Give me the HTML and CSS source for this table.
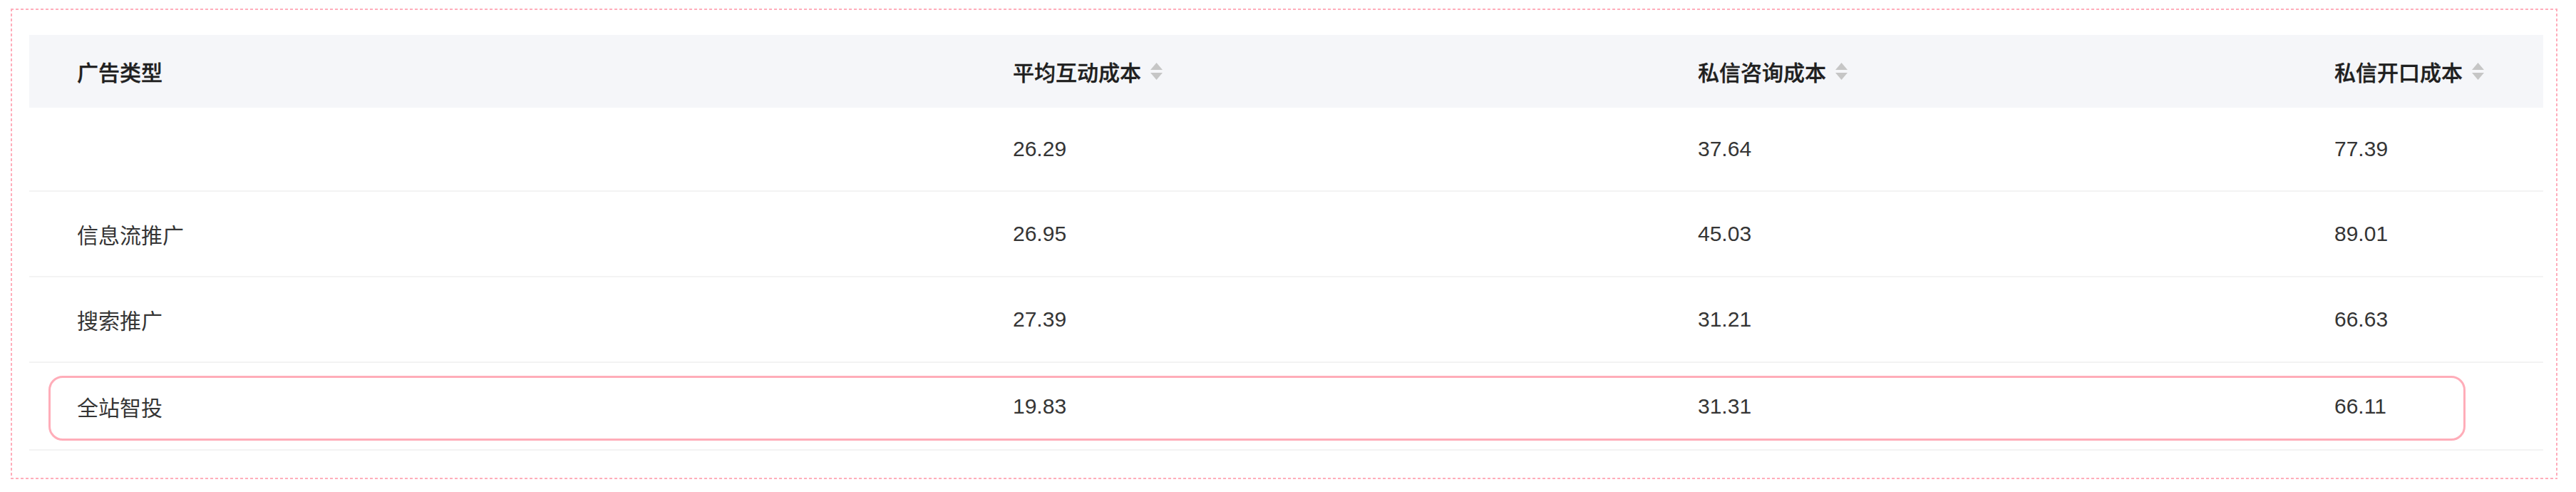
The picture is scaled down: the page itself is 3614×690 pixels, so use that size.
FILE: index.html
```html
<!DOCTYPE html>
<html lang="zh-CN">
<head>
<meta charset="utf-8">
<title>广告类型成本</title>
<link rel="stylesheet" href="styles.css">
</head>
<body>
<div class="frame">
  <div class="table">
    <div class="row head">
      <div class="cell">广告类型</div>
      <div class="cell">平均互动成本<svg class="sort" viewBox="0 0 17 24" width="17" height="24"><polygon points="8.5,0 17,10 0,10"/><polygon points="0,14 17,14 8.5,24"/></svg></div>
      <div class="cell">私信咨询成本<svg class="sort" viewBox="0 0 17 24" width="17" height="24"><polygon points="8.5,0 17,10 0,10"/><polygon points="0,14 17,14 8.5,24"/></svg></div>
      <div class="cell">私信开口成本<svg class="sort" viewBox="0 0 17 24" width="17" height="24"><polygon points="8.5,0 17,10 0,10"/><polygon points="0,14 17,14 8.5,24"/></svg></div>
    </div>
    <div class="row body first">
      <div class="cell"></div>
      <div class="cell">26.29</div>
      <div class="cell">37.64</div>
      <div class="cell">77.39</div>
    </div>
    <div class="row body">
      <div class="cell">信息流推广</div>
      <div class="cell">26.95</div>
      <div class="cell">45.03</div>
      <div class="cell">89.01</div>
    </div>
    <div class="row body">
      <div class="cell">搜索推广</div>
      <div class="cell">27.39</div>
      <div class="cell">31.21</div>
      <div class="cell">66.63</div>
    </div>
    <div class="row body last highlighted">
      <div class="cell">全站智投</div>
      <div class="cell">19.83</div>
      <div class="cell">31.31</div>
      <div class="cell">66.11</div>
    </div>
  </div>
</div>
</body>
</html>
```

FILE: styles.css
```css
html, body {
  margin: 0;
  padding: 0;
  background: #ffffff;
}

body {
  font-family: "Liberation Sans", "Noto Sans CJK SC", sans-serif;
  color: #333333;
}

.frame {
  box-sizing: border-box;
  margin: 12px 0 0 15px;
  width: 3573px;
  height: 660px;
  padding: 37px 16px 0 26px;
  background:
    repeating-linear-gradient(90deg, #ffadbb 0 4px, transparent 4px 7px) left top / 100% 2px no-repeat,
    repeating-linear-gradient(90deg, #ffadbb 0 4px, transparent 4px 7px) left bottom / 100% 2px no-repeat,
    repeating-linear-gradient(180deg, #ffadbb 0 4px, transparent 4px 7px) left top / 2px 100% no-repeat,
    repeating-linear-gradient(180deg, #ffadbb 0 4px, transparent 4px 7px) right top / 2px 100% no-repeat;
}

.table {
  width: 3527px;
}

.row {
  display: grid;
  grid-template-columns: 1313px 961px 893px 1fr;
  align-items: center;
  box-sizing: border-box;
}

.cell {
  padding-left: 67px;
  font-size: 30px;
  display: flex;
  align-items: center;
  white-space: nowrap;
}

.head {
  height: 102px;
  background: #f5f6f9;
}

.head .cell {
  font-weight: 500;
  color: #1f1f1f;
  -webkit-text-stroke: 0.4px #1f1f1f;
}

.sort {
  margin-left: 13px;
  fill: #c6c6c6;
  flex: none;
}

.body {
  height: 120px;
  border-bottom: 2px solid #f3f3f3;
}

.body .cell {
  color: #353535;
}

.body.first {
  height: 118px;
}

.body.last {
  height: 123px;
}

.highlighted {
  position: relative;
}

.highlighted::after {
  content: "";
  position: absolute;
  left: 27px;
  top: 18px;
  width: 3391px;
  height: 91px;
  box-sizing: border-box;
  border: 3px solid #ffadb9;
  border-radius: 20px;
  pointer-events: none;
}
```
